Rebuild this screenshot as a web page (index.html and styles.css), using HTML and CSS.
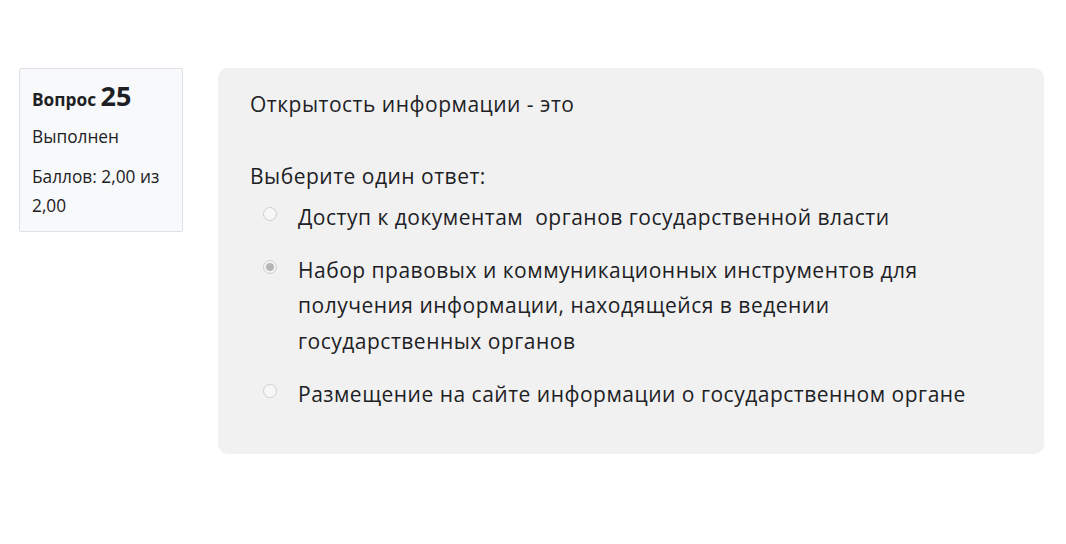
FILE: index.html
```html
<!DOCTYPE html>
<html lang="ru">
<head>
    <meta charset="UTF-8">
    <meta name="viewport" content="width=device-width, initial-scale=1.0">
    <title>Вопрос 25</title>
    <link rel="stylesheet" href="styles.css">
</head>
<body>
<div class="que">
    <div class="info">
        <h3 class="no">Вопрос <span class="qno">25</span></h3>
        <div class="state">Выполнен</div>
        <div class="grade">Баллов: 2,00 из 2,00</div>
    </div>
    <div class="content">
        <div class="qtext">Открытость информации - это</div>
        <div class="prompt">Выберите один ответ:</div>
        <div class="answer">
            <label class="option">
                <input type="radio" name="q25" disabled>
                <span class="text">Доступ к документам&nbsp; органов государственной власти</span>
            </label>
            <label class="option">
                <input type="radio" name="q25" checked disabled>
                <span class="text">Набор правовых и коммуникационных инструментов для получения информации, находящейся в ведении государственных органов</span>
            </label>
            <label class="option">
                <input type="radio" name="q25" disabled>
                <span class="text">Размещение на сайте информации о государственном органе</span>
            </label>
        </div>
    </div>
</div>
</body>
</html>
```

FILE: styles.css
```css
body {
    margin: 0;
    font-family: "Open Sans", "Noto Sans", sans-serif;
    color: #1d2125;
    background: #fff;
}

.que {
    display: flex;
    align-items: flex-start;
    gap: 35px;
    padding: 68px 22px 0 19px;
}

.info {
    width: 164px;
    box-sizing: border-box;
    flex-shrink: 0;
    background-color: #f8f9fa;
    border: 1px solid #dee2e6;
    border-radius: 2px;
    padding: 9px 12px 11px;
    font-size: 17.3px;
    line-height: 29px;
}

.no {
    margin: 0 0 4px;
    font-size: 17.3px;
    font-weight: 700;
    line-height: 36px;
}

.qno {
    font-size: 27px;
}

.state {
    margin-bottom: 11px;
}

.content {
    flex: 1;
    background-color: #f1f1f1;
    border-radius: 10px;
    padding: 19px 32px 42px;
    font-size: 21px;
    letter-spacing: 0.5px;
    line-height: 35.5px;
}

.qtext {
    margin-bottom: 36.5px;
}

.prompt {
    margin-bottom: 5px;
}

.answer {
    display: flex;
    flex-direction: column;
    gap: 17.5px;
}

.option {
    display: flex;
    align-items: flex-start;
}

.option input {
    appearance: none;
    -webkit-appearance: none;
    width: 14px;
    height: 14px;
    margin: 7px 21px 0 13px;
    flex-shrink: 0;
    border: 1px solid #cfcfcf;
    border-radius: 50%;
    background: #f7f7f7;
    box-sizing: border-box;
}

.option input:checked {
    background: radial-gradient(circle, #b5b5b5 0, #b5b5b5 3.5px, #f3f3f3 4.5px);
}

.text {
    flex: 1;
    max-width: 682px;
}
```
